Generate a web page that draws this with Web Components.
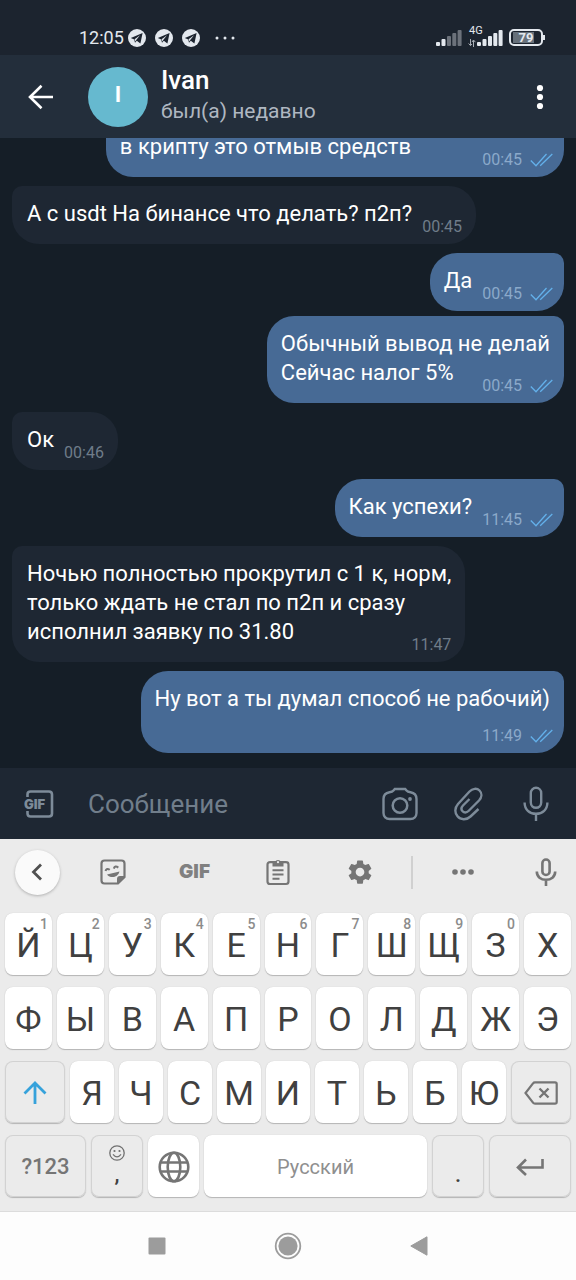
<!DOCTYPE html>
<html lang="ru">
<head>
<meta charset="utf-8">
<meta name="viewport" content="width=device-width, initial-scale=1">
<title>Ivan</title>
<style>
  html, body { margin: 0; min-height: 100%; }
  body { font-family: Roboto, "Noto Sans", sans-serif; background: #151e27; }
</style>
</head>
<body>
<phone-screen>
  <status-bar slot="status"></status-bar>
  <chat-header slot="header" name="Ivan" status="был(а) недавно"></chat-header>
  <chat-message out continued time="00:45">в крипту это отмыв средств</chat-message>
  <chat-message time="00:45">А с usdt На бинансе что делать? п2п?</chat-message>
  <chat-message out time="00:45" class="grouped">Да</chat-message>
  <chat-message out time="00:45">Обычный вывод не делай<br>Сейчас налог 5%</chat-message>
  <chat-message time="00:46">Ок</chat-message>
  <chat-message out time="11:45">Как успехи?</chat-message>
  <chat-message time="11:47">Ночью полностью прокрутил с 1 к, норм,<br>только ждать не стал по п2п и сразу<br>исполнил заявку по 31.80</chat-message>
  <chat-message out below time="11:49">Ну вот а ты думал способ не рабочий)</chat-message>
  <message-composer slot="composer"></message-composer>
  <soft-keyboard slot="keyboard"></soft-keyboard>
  <nav-bar slot="nav"></nav-bar>
</phone-screen>

<script>
const S = 'fill="none" stroke="currentColor"';
const ICONS = {
  telegram: [18, 18, `<circle cx="9" cy="9" r="9" fill="currentColor"/><path d="M2.8 9 14.6 4 12.400 14.400 8.800 11.800 7 13.800 6.200 10.400Z" fill="#1c242f"/><path d="M6.600 10.300 12 6.300 8 11.200 7.200 12.400Z" fill="currentColor"/>`],
  more: [20, 4, `<g fill="currentColor"><circle cx="2" cy="2" r="1.5"/><circle cx="10" cy="2" r="1.5"/><circle cx="18" cy="2" r="1.5"/></g>`],
  signalWeak: [26, 18, `<g fill="currentColor"><rect x="0" y="13" width="4" height="4" rx="1"/><rect x="5.5" y="10" width="4" height="7" rx="1"/><g opacity=".4"><rect x="11" y="7" width="4" height="10" rx="1"/><rect x="16.300" y="4" width="4" height="13" rx="1"/><rect x="21.600" y="1" width="4" height="16" rx="1"/></g></g>`],
  signal: [26, 18, `<g fill="currentColor"><rect x="0" y="13" width="4" height="4" rx="1"/><rect x="5.500" y="10" width="4" height="7" rx="1"/><rect x="11" y="7" width="4" height="10" rx="1"/><rect x="16.300" y="4" width="4" height="13" rx="1"/><rect x="21.600" y="1" width="4" height="16" rx="1"/></g>`],
  updown: [8, 8, `<path d="M2.500 0V6M.6 4.500 2.500 6.600 4 5M5.500 8V2M4 3 5.500 1 7.400 3.200" ${S} stroke-width="1" opacity=".7"/>`],
  back: [26, 26, `<path d="M25 13H2M13.500 1.800 2 13 13.500 24.200" ${S} stroke-width="2.600"/>`],
  menu: [8, 26, `<g fill="currentColor"><circle cx="4" cy="4" r="3.100"/><circle cx="4" cy="13" r="3.100"/><circle cx="4" cy="22" r="3.100"/></g>`],
  checks: [23, 14, `<path d="M.8 7.500 6 12.800 16.500 1M10.200 12.800 22.300 1" ${S} stroke-width="1.300"/>`],
  camera: [36, 34, `<path d="M11.500 3.500 12.800 2H23.200L24.500 3.500C25.500 4.700 26.600 5 28.500 5.200 32.500 5.800 34.500 8.500 34.500 12V26C34.500 29.500 32 32 28.500 32H7.500C4 32 1.500 29.500 1.500 26V12C1.500 8.500 3.500 5.800 7.500 5.200 9.400 5 10.500 4.700 11.500 3.500Z" ${S} stroke-width="2.400"/><circle cx="18" cy="18.500" r="7.300" ${S} stroke-width="2.500"/><circle cx="28" cy="12" r="1.900" fill="currentColor"/>`],
  clip: [29, 34, `<path d="M24.500 22 16.500 29.500C12.500 33.300 6.500 33 3.500 29.300 .4 25.700 .8 20.600 4 17L15.500 4.500C18.500 1.200 23 1 25.500 3.500 28.300 6.300 27.800 10.500 25 13.500L14.500 24C12.500 26 10 25.800 8.600 24.300 7 22.600 7.300 20.300 9 18.500L15.500 12" ${S} stroke-width="2.400"/>`],
  mic: [26, 36, `<rect x="7.800" y="1.800" width="10.400" height="20" rx="5.200" ${S} stroke-width="2.400"/><path d="M1.600 16.500C1.600 23.500 6.500 27.800 13 27.800S24.400 23.500 24.400 16.500M13 28V35" ${S} stroke-width="2.400"/>`],
  micSmall: [22, 28, `<rect x="7.400" y="1.500" width="7.200" height="15.500" rx="3.600" ${S} stroke-width="2.600"/><path d="M1.800 13.500C1.800 18.800 6 21.800 11 21.800S20.200 18.800 20.200 13.500M11 22V28" ${S} stroke-width="2.600"/>`],
  gifBox: [30, 28, `<path d="M3.500 7V4.500Q3.500 1.500 6.500 1.500H25Q28 1.500 28 4.500V23.500Q28 26.500 25 26.500H6.500Q3.500 26.500 3.500 23.500V21" ${S} stroke-width="2.600"/><text x="0" y="19" font-family="Inter" font-weight="900" font-size="13" fill="currentColor">GIF</text>`],
  chevron: [12, 18, `<path d="M10 1.500 2.500 9 10 16.500" ${S} stroke-width="2.800"/>`],
  sticker: [26, 26, `<path d="M18 24.500H4.500Q1.500 24.500 1.500 21.500V4.500Q1.500 1.500 4.500 1.500H21.500Q24.500 1.500 24.500 4.500V18Z" ${S} stroke-width="2.200"/><path d="M25 17 17 25V20Q17 17 20 17Z" fill="currentColor"/><path d="M7 15.500 19.500 12.500C18 18.500 10.500 20 7 15.500Z" fill="currentColor"/><path d="M5.500 12Q6.500 8.500 9.800 10.800M13.800 9.600Q15 6 18.300 8.600" ${S} stroke-width="2"/>`],
  clipboard: [24, 28, `<path d="M4.200 4.200H19.800Q22.500 4.200 22.500 6.500V23.500Q22.500 26 20 26H4Q1.500 26 1.500 23.500V6.500Q1.500 4.200 4.200 4.200Z" ${S} stroke-width="2.200"/><path d="M6.500 4H9A3.200 3.200 0 0 1 15 4H17.500V8.500H6.500Z" fill="currentColor"/><circle cx="12" cy="4.200" r="1.100" fill="#ebebeb"/><path d="M6.500 12.300H17.500M6.500 16.500H17.500M6.500 20.700H13.500" ${S} stroke-width="1.900"/>`],
  gear: [28, 28, `<path transform="translate(-.5 -.5) scale(1.21)" d="M19.140 12.940c.04-.3.06-.61.06-.94 0-.32-.02-.64-.07-.94l2.030-1.580c.18-.14.230-.41.12-.61l-1.920-3.320c-.12-.22-.37-.29-.59-.22l-2.390.96c-.5-.38-1.030-.7-1.620-.94l-.36-2.540c-.04-.24-.24-.41-.48-.41h-3.840c-.24 0-.43.17-.47.41l-.36 2.540c-.59.24-1.130.57-1.620.94l-2.390-.96c-.22-.08-.47 0-.59.22L2.740 8.870c-.12.21-.08.47.12.61l2.030 1.580c-.05.3-.09.63-.09.94s.02.64.07.94l-2.030 1.580c-.18.14-.23.41-.12.61l1.920 3.320c.12.22.37.29.59.22l2.390-.96c.5.38 1.030.7 1.620.94l.36 2.540c.05.24.24.41.48.41h3.840c.24 0 .44-.17.47-.41l.36-2.540c.59-.24 1.130-.56 1.620-.94l2.390.96c.22.08.47 0 .59-.22l1.920-3.320c.12-.22.07-.47-.12-.61l-2.010-1.580zM12 15.600c-1.980 0-3.600-1.620-3.600-3.600s1.620-3.600 3.600-3.600 3.600 1.620 3.600 3.600-1.620 3.600-3.600 3.600z" fill="currentColor"/>`],
  dots: [22, 6, `<g fill="currentColor"><circle cx="3" cy="3" r="2.800"/><circle cx="11" cy="3" r="2.800"/><circle cx="19" cy="3" r="2.800"/></g>`],
  shift: [24, 24, `<path d="M12 23V2.500M1.500 12.500 12 2 22.500 12.500" ${S} stroke-width="2.800"/>`],
  erase: [34, 24, `<path d="M11 1.300H31Q32.700 1.300 32.700 3V21Q32.700 22.700 31 22.700H11Q9.700 22.700 9 21.700L1.500 12 9 2.300Q9.700 1.300 11 1.300Z" ${S} stroke-width="2.200"/><path d="M15.500 7.500 24.500 16.500M24.500 7.500 15.500 16.500" ${S} stroke-width="2.400"/>`],
  globe: [32, 32, `<g ${S} stroke-width="2.600"><circle cx="16" cy="16" r="14.300"/><ellipse cx="16" cy="16" rx="6.300" ry="14.300"/><path d="M2.500 11.500H29.500M2.500 20.500H29.500"/></g>`],
  smile: [16, 16, `<circle cx="8" cy="8" r="7.200" ${S} stroke-width="1.300"/><circle cx="5.500" cy="6" r="1.100" fill="currentColor"/><circle cx="10.500" cy="6" r="1.100" fill="currentColor"/><path d="M4 9.300Q8 14.300 12 9.300" ${S} stroke-width="1.300"/>`],
  enter: [28, 18, `<path d="M26.500 1V9.500H2M10 1.500 2 9.500 10 17" ${S} stroke-width="2.600"/>`],
  recents: [18, 18, `<rect x=".5" y=".5" width="17" height="17" rx="1" fill="currentColor"/>`],
  home: [28, 28, `<circle cx="14" cy="14" r="12.300" ${S} stroke-width="1.800"/><circle cx="14" cy="14" r="9.600" fill="currentColor"/>`],
  prev: [18, 20, `<path d="M.8 10 17 .8V19.200Z" fill="currentColor" stroke="currentColor" stroke-width="1" stroke-linejoin="round"/>`]
};

function define(name, markup, setup) {
  const template = document.createElement('template');
  template.innerHTML = markup;
  customElements.define(name, class extends HTMLElement {
    connectedCallback() {
      if (this.shadowRoot) return;
      const root = this.attachShadow({ mode: 'open' });
      root.append(template.content.cloneNode(true));
      if (setup) setup(this, root);
    }
  });
}

const RESET = `button { all: unset; box-sizing: border-box; display: flex; align-items: center; justify-content: center; cursor: pointer; }`;

define('ui-icon', `<style>:host { display: block; flex: none; } svg { display: block; }</style>`, (host, root) => {
  const [w, h, body] = ICONS[host.getAttribute('name')];
  root.innerHTML += `<svg width="${w}" height="${h}" viewBox="0 0 ${w} ${h}" aria-hidden="true">${body}</svg>`;
});

define('phone-screen', `
<style>
  :host { display: flex; flex-direction: column; min-height: 100vh; background: #151e27; }
  main { flex: 1 1 0; min-height: 0; overflow: hidden; display: flex; flex-direction: column; justify-content: flex-end; gap: 9px; padding: 0 12px 15px; }
  ::slotted(.grouped) { margin-bottom: -4px; }
</style>
<slot name="status"></slot><slot name="header"></slot>
<main><slot></slot></main>
<slot name="composer"></slot><slot name="keyboard"></slot><slot name="nav"></slot>`);

define('status-bar', `
<style>
  :host { display: flex; align-items: center; justify-content: space-between; height: 55px; box-sizing: border-box; padding: 20px 31px 0 79px; background: #1c242f; color: #e3e8ee; font-size: 18px; line-height: 24px; }
  .group { display: flex; align-items: center; gap: 9px; }
  .time { margin-right: -5px; }
  .more { margin-left: 6px; }
  .right { gap: 6px; }
  .mobile { display: grid; grid-template-columns: 9px 26px; align-items: end; position: relative; }
  .net { position: absolute; left: 1px; top: -4px; font-size: 11px; line-height: 12px; }
  .battery { display: flex; align-items: center; }
  .cell { box-sizing: border-box; width: 34px; height: 17px; border: 2px solid; border-radius: 5px; font-size: 13px; line-height: 13px; font-weight: 700; text-align: center; background: linear-gradient(90deg, #66707a 80%, transparent 80%) 2px 1px / 26px 11px no-repeat; }
  .tip { width: 2px; height: 5px; background: currentColor; }
</style>
<div class="group"><span class="time">12:05</span><ui-icon name="telegram"></ui-icon><ui-icon name="telegram"></ui-icon><ui-icon name="telegram"></ui-icon><ui-icon class="more" name="more"></ui-icon></div>
<div class="group right"><ui-icon name="signalWeak"></ui-icon>
<div class="mobile"><span class="net">4G</span><ui-icon name="updown"></ui-icon><ui-icon name="signal"></ui-icon></div>
<div class="battery"><div class="cell">79</div><div class="tip"></div></div></div>`);

define('chat-header', `
<style>
  :host { display: flex; align-items: center; height: 83px; background: #232e3b; color: #fff; }
  ${RESET}
  .back { width: 88px; height: 60px; padding-right: 6px; }
  .avatar { width: 60px; height: 60px; border-radius: 50%; background: #66b9cf; text-align: center; font-size: 22px; line-height: 56px; font-weight: 700; }
  .who { flex: 1; padding: 0 0 3px 13px; }
  h1 { margin: 0; font-size: 26px; line-height: 32px; font-weight: 500; }
  p { margin: 0; font-size: 21px; line-height: 30px; color: #afb7c1; }
  .menu { width: 72px; height: 60px; }
</style>
<button class="back" aria-label="Назад"><ui-icon name="back"></ui-icon></button>
<div class="avatar"></div>
<div class="who"><h1></h1><p></p></div>
<button class="menu" aria-label="Меню"><ui-icon name="menu"></ui-icon></button>`, (host, root) => {
  const name = host.getAttribute('name');
  root.querySelector('.avatar').textContent = name[0];
  root.querySelector('h1').textContent = name;
  root.querySelector('p').textContent = host.getAttribute('status');
});

define('chat-message', `
<style>
  :host { display: flow-root; flex: none; box-sizing: border-box; align-self: flex-start; max-width: 90%; padding: 13px 14px 7px 15px; border-radius: 10px 27px 27px 27px; background: #1e2733; color: #fff; font-size: 22px; line-height: 29px; }
  :host([out]) { align-self: flex-end; background: #476a95; border-radius: 27px 10px 27px 27px; padding-left: 14px; }
  :host([continued]) { width: 83%; border-top-left-radius: 0; border-top-right-radius: 0; }
  .meta { float: right; display: flex; align-items: center; gap: 8px; margin: 18px 0 0 10px; font-size: 16px; line-height: 20px; color: #6f7c89; }
  :host([out]) .meta { margin-right: -3px; color: #8ba9ca; }
  :host([below]) .meta { clear: both; float: none; justify-content: flex-end; margin-top: 13px; }
  ui-icon { display: none; color: #63b0ea; }
  :host([out]) ui-icon { display: block; }
</style>
<slot></slot><span class="meta"><time></time><ui-icon name="checks"></ui-icon></span>`, (host, root) => {
  root.querySelector('time').textContent = host.getAttribute('time');
});

define('message-composer', `
<style>
  :host { display: flex; align-items: center; height: 71px; box-sizing: border-box; background: #1e2733; color: #7d8b99; padding-right: 6px; }
  ${RESET}
  button { width: 68px; height: 60px; }
  .gif { width: 88px; padding-right: 10px; }
  input { flex: 1; min-width: 0; border: 0; padding: 0; outline: 0; background: none; color: #fff; font: 26px/32px Roboto, "Noto Sans", sans-serif; }
  input::placeholder { color: #717e8b; opacity: 1; }
</style>
<button class="gif" aria-label="GIF"><ui-icon name="gifBox"></ui-icon></button>
<input type="text" placeholder="Сообщение" aria-label="Сообщение">
<button aria-label="Камера"><ui-icon name="camera"></ui-icon></button>
<button aria-label="Прикрепить"><ui-icon name="clip"></ui-icon></button>
<button aria-label="Голосовое сообщение"><ui-icon name="mic"></ui-icon></button>`);

define('kb-key', `
<style>
  :host { display: block; }
  ${RESET}
  button { position: relative; flex-direction: column; width: 100%; height: 62px; padding-top: 2px; border-radius: 8px; background: #fff; box-shadow: 0 1px 1px #b4b4b4, 0 0 1px #c4c4c4; color: #404040; font-size: 34px; line-height: 40px; }
  :host([dim]) button { background: #ebebeb; box-shadow: inset 0 0 0 1px #d2d2d2, 0 1px 1px #b4b4b4; color: #757575; font-size: 22px; line-height: 28px; }
  :host([small]) button { color: #8f8f8f; font-size: 20px; line-height: 28px; }
  :host([low]) button { justify-content: flex-end; padding-bottom: 8px; color: #404040; }
  ::slotted(ui-icon[name="smile"]) { color: #707070; }
  :host([bold]) button { font-weight: 500; }
  :host([active]) button { color: #36a2db; }
  :host([globe]) button { color: #757575; }
  sup { position: absolute; right: 4px; top: 2px; font-size: 14px; line-height: 18px; font-weight: 500; color: #8c8c8c; }
</style>
<button><slot></slot></button>`, (host, root) => {
  const button = root.querySelector('button');
  if (host.hasAttribute('alt')) {
    const sup = document.createElement('sup');
    sup.textContent = host.getAttribute('alt');
    button.append(sup);
  }
  if (host.hasAttribute('label')) button.setAttribute('aria-label', host.getAttribute('label'));
});

define('soft-keyboard', `
<style>
  :host { display: block; background: #ebebeb; color: #757575; padding-bottom: 14px; border-bottom: 1px solid #dcdcdc; }
  ${RESET}
  .tools { display: grid; grid-template-columns: 74fr 77fr 87fr 79fr 86fr 18fr 83fr 72fr; align-items: center; justify-items: center; padding-bottom: 8px; box-sizing: border-box; height: 74px; }
  .tools button { height: 48px; min-width: 48px; }
  .tools .collapse { width: 45px; height: 45px; min-width: 0; border-radius: 50%; background: #fafafa; box-shadow: 0 1px 3px #b0b0b0; color: #505050; }
  .tools .gif { font: 900 19px/24px Inter, sans-serif; color: #808080; }
  .line { width: 2px; height: 33px; background: #d0d0d0; }
  .voice { padding-left: 12px; }
  .rows { display: grid; gap: 12px; padding: 0 5px; }
  .row { display: grid; gap: 5px; grid-template-columns: repeat(11, minmax(0, 1fr)); }
  .third { grid-template-columns: 60fr repeat(9, 44fr) 60fr; }
  .fourth { grid-template-columns: 81fr 52fr 51fr 223fr 52fr 82fr; }
</style>
<div class="tools">
  <button class="collapse" aria-label="Свернуть"><ui-icon name="chevron"></ui-icon></button>
  <button aria-label="Стикеры"><ui-icon name="sticker"></ui-icon></button>
  <button class="gif">GIF</button>
  <button aria-label="Буфер обмена"><ui-icon name="clipboard"></ui-icon></button>
  <button aria-label="Настройки"><ui-icon name="gear"></ui-icon></button>
  <span class="line"></span>
  <button aria-label="Ещё"><ui-icon name="dots"></ui-icon></button>
  <button class="voice" aria-label="Голосовой ввод"><ui-icon name="micSmall"></ui-icon></button>
</div>
<div class="rows">
  <div class="row first"></div>
  <div class="row second"></div>
  <div class="row third"></div>
  <div class="row fourth">
    <kb-key dim bold>?123</kb-key>
    <kb-key dim low bold><ui-icon name="smile"></ui-icon>,</kb-key>
    <kb-key globe label="Сменить язык"><ui-icon name="globe"></ui-icon></kb-key>
    <kb-key small>Русский</kb-key>
    <kb-key dim low bold>.</kb-key>
    <kb-key dim label="Ввод"><ui-icon name="enter"></ui-icon></kb-key>
  </div>
</div>`, (host, root) => {
  const keys = (letters, digits = '') => [...letters].map((c, i) =>
    `<kb-key${digits[i] ? ` alt="${digits[i]}"` : ''}>${c}</kb-key>`).join('');
  root.querySelector('.first').innerHTML = keys('ЙЦУКЕНГШЩЗХ', '1234567890');
  root.querySelector('.second').innerHTML = keys('ФЫВАПРОЛДЖЭ');
  root.querySelector('.third').innerHTML =
    '<kb-key dim active label="Shift"><ui-icon name="shift"></ui-icon></kb-key>' + keys('ЯЧСМИТЬБЮ') +
    '<kb-key dim label="Удалить"><ui-icon name="erase"></ui-icon></kb-key>';
});

define('nav-bar', `
<style>
  :host { display: flex; justify-content: center; align-items: center; height: 68px; background: #fdfdfd; color: #9c9c9c; }
  ${RESET}
  button { width: 131px; height: 48px; }
</style>
<button aria-label="Недавние"><ui-icon name="recents"></ui-icon></button>
<button aria-label="Домой"><ui-icon name="home"></ui-icon></button>
<button aria-label="Назад"><ui-icon name="prev"></ui-icon></button>`);
</script>
</body>
</html>
